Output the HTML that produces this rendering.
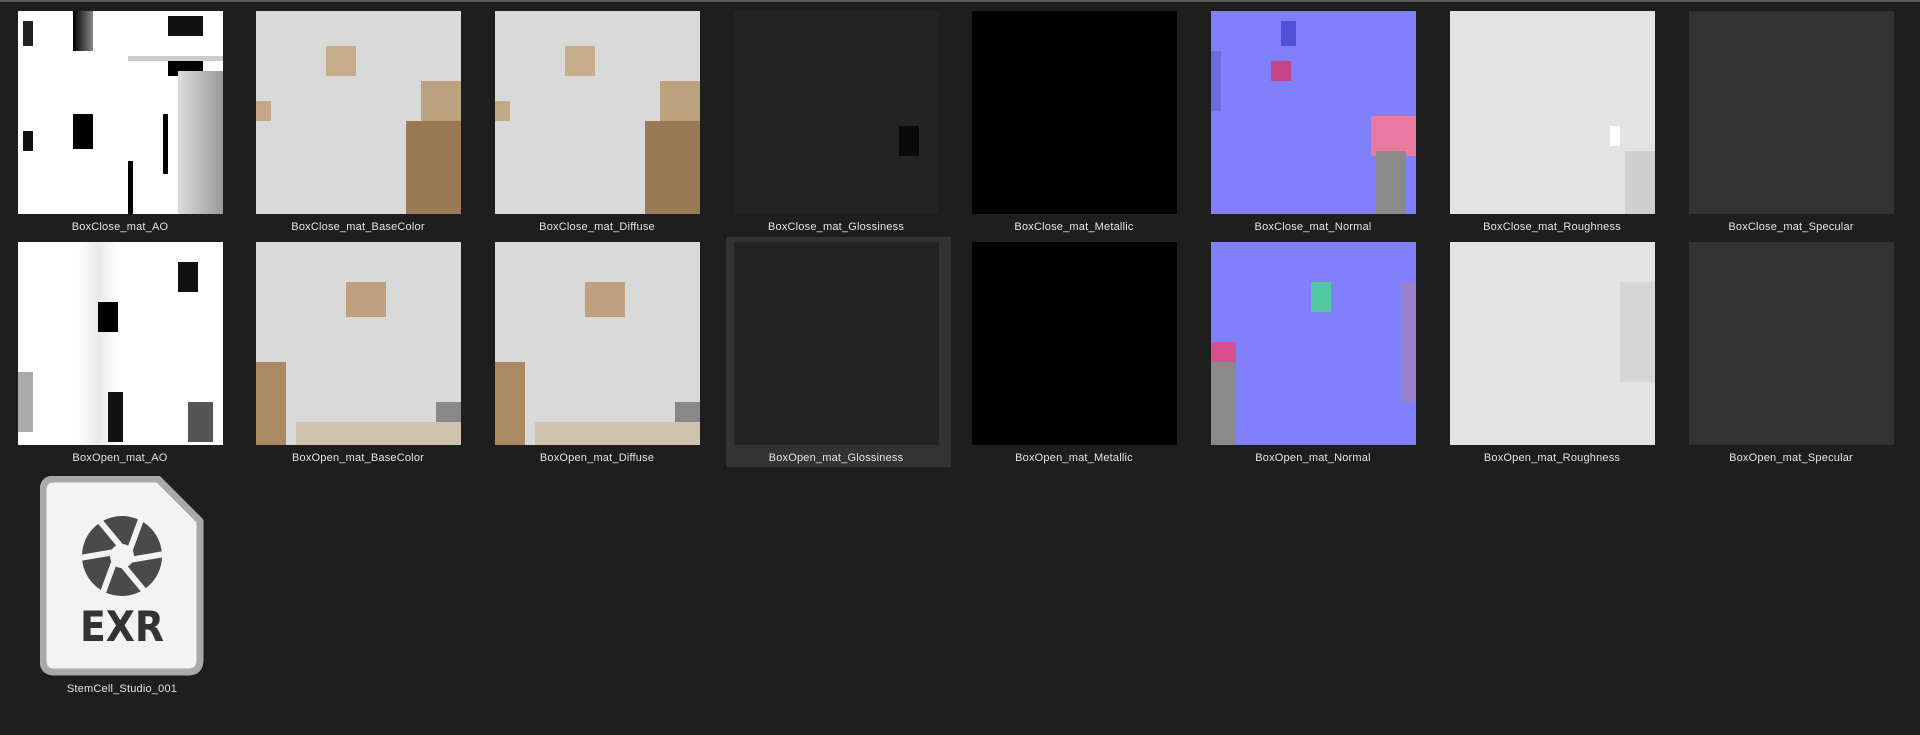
<!DOCTYPE html>
<html><head><style>
html,body{margin:0;padding:0;background:#1e1e1e;width:1920px;height:735px;overflow:hidden;font-family:"Liberation Sans",sans-serif;}
.top{position:absolute;left:0;top:0;width:1920px;height:2px;background:#5a5a5a}
.t{position:absolute;width:205px;height:203px;overflow:hidden}
.l{position:absolute;width:238px;text-align:center;color:#e4e4e4;font-size:11px;letter-spacing:0.2px}
.sel{position:absolute;left:726px;top:237px;width:225px;height:230px;background:#333}
.p{position:absolute}
</style></head><body>
<div class="top"></div>
<div class="sel"></div>

<!-- Row 1 -->
<div class="t" style="left:18px;top:11px;background:#fff">
 <div class="p" style="left:55px;top:0;width:20px;height:40px;background:linear-gradient(90deg,#000,#888)"></div>
 <div class="p" style="left:150px;top:5px;width:35px;height:20px;background:#111"></div>
 <div class="p" style="left:150px;top:50px;width:35px;height:15px;background:#000"></div>
 <div class="p" style="left:55px;top:103px;width:20px;height:35px;background:#000"></div>
 <div class="p" style="left:110px;top:45px;width:95px;height:5px;background:#ccc"></div>
 <div class="p" style="left:160px;top:60px;width:45px;height:143px;background:linear-gradient(90deg,#ddd,#999)"></div>
 <div class="p" style="left:110px;top:150px;width:5px;height:53px;background:#000"></div>
 <div class="p" style="left:145px;top:103px;width:5px;height:60px;background:#000"></div>
 <div class="p" style="left:5px;top:10px;width:10px;height:25px;background:#222"></div>
 <div class="p" style="left:5px;top:120px;width:10px;height:20px;background:#111"></div>
</div>
<div class="t" style="left:256px;top:11px;background:#d9d9d9">
 <div class="p" style="left:150px;top:110px;width:55px;height:93px;background:#9a7a55"></div>
 <div class="p" style="left:165px;top:70px;width:40px;height:40px;background:#bda27f"></div>
 <div class="p" style="left:70px;top:35px;width:30px;height:30px;background:#c6ae8c"></div>
 <div class="p" style="left:0;top:90px;width:15px;height:20px;background:#c4a988"></div>
</div>
<div class="t" style="left:495px;top:11px;background:#d9d9d9">
 <div class="p" style="left:150px;top:110px;width:55px;height:93px;background:#9a7a55"></div>
 <div class="p" style="left:165px;top:70px;width:40px;height:40px;background:#bda27f"></div>
 <div class="p" style="left:70px;top:35px;width:30px;height:30px;background:#c6ae8c"></div>
 <div class="p" style="left:0;top:90px;width:15px;height:20px;background:#c4a988"></div>
</div>
<div class="t" style="left:734px;top:11px;background:#232323">
 <div class="p" style="left:165px;top:115px;width:20px;height:30px;background:#0a0a0a"></div>
</div>
<div class="t" style="left:972px;top:11px;background:#000"></div>
<div class="t" style="left:1211px;top:11px;background:#8080fc">
 <div class="p" style="left:160px;top:105px;width:45px;height:40px;background:#e879a0"></div>
 <div class="p" style="left:165px;top:140px;width:30px;height:63px;background:#8a8a8a"></div>
 <div class="p" style="left:60px;top:50px;width:20px;height:20px;background:#cc4488"></div>
 <div class="p" style="left:70px;top:10px;width:15px;height:25px;background:#5050d8"></div>
 <div class="p" style="left:0;top:40px;width:10px;height:60px;background:#6c6ce0"></div>
</div>
<div class="t" style="left:1450px;top:11px;background:#e3e3e3">
 <div class="p" style="left:160px;top:115px;width:10px;height:20px;background:#fff"></div>
 <div class="p" style="left:175px;top:140px;width:30px;height:63px;background:#cfcfcf"></div>
</div>
<div class="t" style="left:1689px;top:11px;background:#333"></div>

<div class="l" style="left:1px;top:221px">BoxClose_mat_AO</div>
<div class="l" style="left:239px;top:221px">BoxClose_mat_BaseColor</div>
<div class="l" style="left:478px;top:221px">BoxClose_mat_Diffuse</div>
<div class="l" style="left:717px;top:221px">BoxClose_mat_Glossiness</div>
<div class="l" style="left:955px;top:221px">BoxClose_mat_Metallic</div>
<div class="l" style="left:1194px;top:221px">BoxClose_mat_Normal</div>
<div class="l" style="left:1433px;top:221px">BoxClose_mat_Roughness</div>
<div class="l" style="left:1672px;top:221px">BoxClose_mat_Specular</div>

<!-- Row 2 -->
<div class="t" style="left:18px;top:242px;background:#fff">
 <div class="p" style="left:60px;top:0;width:40px;height:203px;background:linear-gradient(90deg,#fff,#e8e8e8,#fff)"></div>
 <div class="p" style="left:160px;top:20px;width:20px;height:30px;background:#111"></div>
 <div class="p" style="left:80px;top:60px;width:20px;height:30px;background:#000"></div>
 <div class="p" style="left:90px;top:150px;width:15px;height:50px;background:#111"></div>
 <div class="p" style="left:0;top:130px;width:15px;height:60px;background:#aaa"></div>
 <div class="p" style="left:170px;top:160px;width:25px;height:40px;background:#555"></div>
</div>
<div class="t" style="left:256px;top:242px;background:#d9d9d9">
 <div class="p" style="left:0;top:120px;width:30px;height:83px;background:#a98a63"></div>
 <div class="p" style="left:90px;top:40px;width:40px;height:35px;background:#bfa27d"></div>
 <div class="p" style="left:180px;top:160px;width:25px;height:20px;background:#888"></div>
 <div class="p" style="left:40px;top:180px;width:165px;height:23px;background:#cfc2ae"></div>
</div>
<div class="t" style="left:495px;top:242px;background:#d9d9d9">
 <div class="p" style="left:0;top:120px;width:30px;height:83px;background:#a98a63"></div>
 <div class="p" style="left:90px;top:40px;width:40px;height:35px;background:#bfa27d"></div>
 <div class="p" style="left:180px;top:160px;width:25px;height:20px;background:#888"></div>
 <div class="p" style="left:40px;top:180px;width:165px;height:23px;background:#cfc2ae"></div>
</div>
<div class="t" style="left:734px;top:242px;background:#232323"></div>
<div class="t" style="left:972px;top:242px;background:#000"></div>
<div class="t" style="left:1211px;top:242px;background:#8080fc">
 <div class="p" style="left:0;top:110px;width:25px;height:93px;background:#8a8a8a"></div>
 <div class="p" style="left:0;top:100px;width:25px;height:20px;background:#d85090"></div>
 <div class="p" style="left:190px;top:40px;width:15px;height:120px;background:#9a80c8"></div>
 <div class="p" style="left:100px;top:40px;width:20px;height:30px;background:#50c8a0"></div>
</div>
<div class="t" style="left:1450px;top:242px;background:#e3e3e3">
 <div class="p" style="left:170px;top:40px;width:35px;height:100px;background:#d5d5d5"></div>
</div>
<div class="t" style="left:1689px;top:242px;background:#333"></div>

<div class="l" style="left:1px;top:452px">BoxOpen_mat_AO</div>
<div class="l" style="left:239px;top:452px">BoxOpen_mat_BaseColor</div>
<div class="l" style="left:478px;top:452px">BoxOpen_mat_Diffuse</div>
<div class="l" style="left:717px;top:452px">BoxOpen_mat_Glossiness</div>
<div class="l" style="left:955px;top:452px">BoxOpen_mat_Metallic</div>
<div class="l" style="left:1194px;top:452px">BoxOpen_mat_Normal</div>
<div class="l" style="left:1433px;top:452px">BoxOpen_mat_Roughness</div>
<div class="l" style="left:1672px;top:452px">BoxOpen_mat_Specular</div>

<!-- EXR icon -->
<svg class="p" style="left:40px;top:476px" width="164" height="200" viewBox="0 0 164 200">
 <path d="M14 3 H118 L160 45 V184 Q160 196 148 196 H14 Q3 196 3 184 V15 Q3 3 14 3 Z" fill="#f3f3f3" stroke="#a9a9a9" stroke-width="7" stroke-linejoin="round"/>
 <g transform="translate(82 80) rotate(-10)" fill="#4a4a4a">
  <circle r="40"/>
  <g stroke="#f3f3f3" stroke-width="6">
   <line x1="-18" y1="-42" x2="6" y2="0" transform="rotate(0)"/>
   <line x1="-18" y1="-42" x2="6" y2="0" transform="rotate(60)"/>
   <line x1="-18" y1="-42" x2="6" y2="0" transform="rotate(120)"/>
   <line x1="-18" y1="-42" x2="6" y2="0" transform="rotate(180)"/>
   <line x1="-18" y1="-42" x2="6" y2="0" transform="rotate(240)"/>
   <line x1="-18" y1="-42" x2="6" y2="0" transform="rotate(300)"/>
  </g>
  <circle r="12" fill="#f3f3f3"/>
 </g>
 <text x="82" y="165" text-anchor="middle" font-family="DejaVu Sans Condensed, DejaVu Sans, sans-serif" font-size="42" fill="#333" font-weight="bold">EXR</text>
</svg>
<div class="l" style="left:3px;top:683px">StemCell_Studio_001</div>
</body></html>
